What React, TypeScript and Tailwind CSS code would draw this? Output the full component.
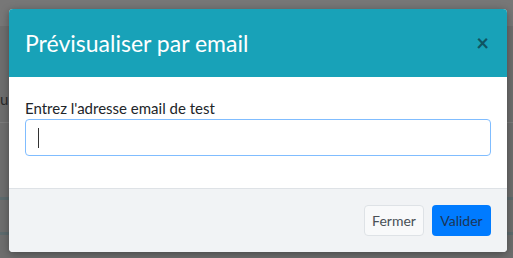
export default function App() {
  return (
    <div className="relative h-[258px] w-[513px] overflow-hidden bg-[#6e6e6e] font-['Lato',sans-serif]">
      {/* page behind the overlay */}
      <div className="absolute inset-x-0 top-0 h-[26px] bg-[#777777]" />
      <div className="absolute inset-x-0 top-[122px] h-px bg-[#7c7c7c]" />
      <div className="absolute left-0 top-[88px] text-[15px] text-[#2a2a2a]">u</div>
      <div className="absolute inset-x-0 top-[197px] h-[3px] bg-[#5d6b6e]" />
      <div className="absolute inset-x-0 top-[232px] h-[3px] bg-[#5d6b6e]" />

      <div className="relative ml-[9px] mt-[9px] w-[498px] overflow-hidden rounded-[4px] bg-white shadow-[0_2px_8px_rgba(0,0,0,0.35)]">
        <div className="flex h-[68px] items-center justify-between bg-[#18a2b8] pl-4 pr-[18px]">
          <h5 className="text-[23px] leading-none text-white">Prévisualiser par email</h5>
          <span className="text-[22px] font-bold leading-none text-[#0f5562]">×</span>
        </div>
        <div className="h-[111px] px-4 pt-[21px]">
          <label className="block text-[15px] leading-5 text-[#212529]">Entrez l'adresse email de test</label>
          <div className="mt-[1px] flex h-[37px] items-center rounded-[4px] border border-[#80bdff] px-3">
            <div className="h-[20px] w-px bg-[#333]" />
          </div>
        </div>
        <div className="flex h-[64px] items-center justify-end gap-2 border-t border-[#dee2e6] bg-[#f1f3f5] pr-4">
          <button className="h-[31px] w-[60px] rounded-[4px] border border-[#dee2e6] bg-[#f8f9fa] text-[14px] text-[#495057]">Fermer</button>
          <button className="h-[31px] w-[59px] rounded-[4px] bg-[#007bff] text-[14px] text-[#1c3557]">Valider</button>
        </div>
      </div>
    </div>
  );
}
